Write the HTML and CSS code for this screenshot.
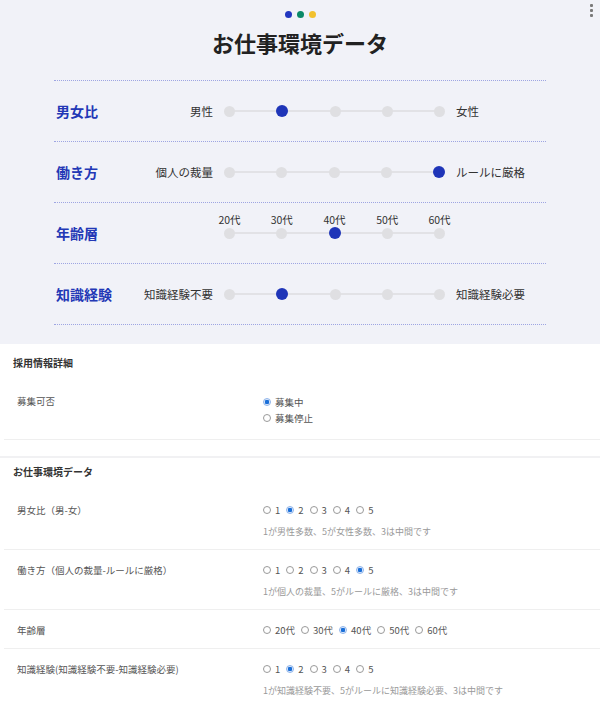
FILE: index.html
```html
<!DOCTYPE html>
<html lang="ja">
<head>
    <meta charset="UTF-8">
    <meta name="viewport" content="width=device-width, initial-scale=1.0">
    <title>お仕事環境データ</title>
    <link rel="stylesheet" href="styles.css">
</head>
<body>
    <div id="preview">
        <div class="menu-dots"><span></span><span></span><span></span></div>
        <div class="brand-dots">
            <span class="dot-blue"></span>
            <span class="dot-green"></span>
            <span class="dot-yellow"></span>
        </div>
        <h1>お仕事環境データ</h1>
        <div class="env-table">
            <div class="env-row">
                <div class="env-label">男女比</div>
                <div class="env-left">男性</div>
                <div class="scale">
                    <span class="stop"></span>
                    <span class="stop active"></span>
                    <span class="stop"></span>
                    <span class="stop"></span>
                    <span class="stop"></span>
                </div>
                <div class="env-right">女性</div>
            </div>
            <div class="env-row">
                <div class="env-label">働き方</div>
                <div class="env-left">個人の裁量</div>
                <div class="scale">
                    <span class="stop"></span>
                    <span class="stop"></span>
                    <span class="stop"></span>
                    <span class="stop"></span>
                    <span class="stop active"></span>
                </div>
                <div class="env-right">ルールに厳格</div>
            </div>
            <div class="env-row">
                <div class="env-label">年齢層</div>
                <div class="env-left"></div>
                <div class="scale">
                    <span class="stop"><em>20代</em></span>
                    <span class="stop"><em>30代</em></span>
                    <span class="stop active"><em>40代</em></span>
                    <span class="stop"><em>50代</em></span>
                    <span class="stop"><em>60代</em></span>
                </div>
                <div class="env-right"></div>
            </div>
            <div class="env-row">
                <div class="env-label">知識経験</div>
                <div class="env-left">知識経験不要</div>
                <div class="scale">
                    <span class="stop"></span>
                    <span class="stop active"></span>
                    <span class="stop"></span>
                    <span class="stop"></span>
                    <span class="stop"></span>
                </div>
                <div class="env-right">知識経験必要</div>
            </div>
        </div>
    </div>

    <div class="panel first">
        <h2 class="panel-title">採用情報詳細</h2>
        <div class="field">
            <div class="field-label">募集可否</div>
            <div class="field-body">
                <div class="radio-list">
                    <label class="radio"><span class="circle checked"></span>募集中</label>
                    <label class="radio"><span class="circle"></span>募集停止</label>
                </div>
            </div>
        </div>
    </div>

    <div class="panel">
        <h2 class="panel-title">お仕事環境データ</h2>
        <div class="field">
            <div class="field-label">男女比（男-女）</div>
            <div class="field-body">
                <div class="radio-row">
                    <label class="radio"><span class="circle"></span>1</label>
                    <label class="radio"><span class="circle checked"></span>2</label>
                    <label class="radio"><span class="circle"></span>3</label>
                    <label class="radio"><span class="circle"></span>4</label>
                    <label class="radio"><span class="circle"></span>5</label>
                </div>
                <p class="help">1が男性多数、5が女性多数、3は中間です</p>
            </div>
        </div>
        <div class="field">
            <div class="field-label">働き方（個人の裁量-ルールに厳格）</div>
            <div class="field-body">
                <div class="radio-row">
                    <label class="radio"><span class="circle"></span>1</label>
                    <label class="radio"><span class="circle"></span>2</label>
                    <label class="radio"><span class="circle"></span>3</label>
                    <label class="radio"><span class="circle"></span>4</label>
                    <label class="radio"><span class="circle checked"></span>5</label>
                </div>
                <p class="help">1が個人の裁量、5がルールに厳格、3は中間です</p>
            </div>
        </div>
        <div class="field">
            <div class="field-label">年齢層</div>
            <div class="field-body">
                <div class="radio-row">
                    <label class="radio"><span class="circle"></span>20代</label>
                    <label class="radio"><span class="circle"></span>30代</label>
                    <label class="radio"><span class="circle checked"></span>40代</label>
                    <label class="radio"><span class="circle"></span>50代</label>
                    <label class="radio"><span class="circle"></span>60代</label>
                </div>
            </div>
        </div>
        <div class="field">
            <div class="field-label">知識経験(知識経験不要-知識経験必要)</div>
            <div class="field-body">
                <div class="radio-row">
                    <label class="radio"><span class="circle"></span>1</label>
                    <label class="radio"><span class="circle checked"></span>2</label>
                    <label class="radio"><span class="circle"></span>3</label>
                    <label class="radio"><span class="circle"></span>4</label>
                    <label class="radio"><span class="circle"></span>5</label>
                </div>
                <p class="help">1が知識経験不要、5がルールに知識経験必要、3は中間です</p>
            </div>
        </div>
    </div>
</body>
</html>
```

FILE: styles.css
```css
body {
    margin: 0;
    padding: 0;
    background-color: #ffffff;
    font-family: "Noto Sans CJK JP", "Noto Sans", sans-serif;
    color: #333333;
}
#preview {
    position: relative;
    background-color: #f1f2f8;
    padding: 11px 0 19px;
}
.menu-dots {
    position: absolute;
    top: 4px;
    right: 7px;
    display: flex;
    flex-direction: column;
    gap: 2px;
}
.menu-dots span {
    width: 3px;
    height: 3px;
    border-radius: 1px;
    background-color: #7a7a7a;
}
.brand-dots {
    display: flex;
    justify-content: center;
    gap: 5px;
}
.brand-dots span {
    width: 7px;
    height: 7px;
    border-radius: 50%;
}
.dot-blue {
    background-color: #2237c0;
}
.dot-green {
    background-color: #0b8a68;
}
.dot-yellow {
    background-color: #f2c12e;
}
h1 {
    margin: 9px 0 0;
    font-size: 22px;
    line-height: 30px;
    font-weight: 700;
    text-align: center;
    color: #222222;
}
.env-table {
    width: 492px;
    margin: 23px auto 0;
    border-top: 1px dotted #9ea5e2;
}
.env-row {
    display: grid;
    grid-template-columns: 72px 76px 221px 1fr;
    column-gap: 11px;
    align-items: center;
    height: 60px;
    border-bottom: 1px dotted #9ea5e2;
}
.env-label {
    padding-left: 2px;
    font-size: 14px;
    font-weight: 700;
    color: #2338b6;
}
.env-left {
    text-align: right;
    white-space: nowrap;
    font-size: 11.5px;
    color: #333333;
}
.env-right {
    white-space: nowrap;
    font-size: 11.5px;
    color: #333333;
}
.scale {
    position: relative;
    display: flex;
    justify-content: space-between;
    align-items: center;
    height: 11px;
}
.scale::before {
    content: "";
    position: absolute;
    left: 5px;
    right: 5px;
    top: 4.5px;
    height: 2px;
    background-color: #e2e2e6;
}
.stop {
    position: relative;
    width: 11px;
    height: 11px;
    border-radius: 50%;
    background-color: #dfdfe2;
}
.stop.active {
    width: 12px;
    height: 12px;
    background-color: #1f35b8;
}
.stop em {
    position: absolute;
    bottom: 12px;
    left: 50%;
    transform: translateX(-50%);
    font-style: normal;
    font-size: 10.5px;
    line-height: 14px;
    white-space: nowrap;
    color: #333333;
}
.panel {
    background-color: #ffffff;
}
.panel.first {
    padding: 5px 0 16px;
    border-bottom: 2px solid #f1f1f3;
}
.panel-title {
    margin: 0;
    padding: 7px 13px 11px;
    font-size: 10px;
    line-height: 14px;
    font-weight: 700;
    color: #333333;
}
.field {
    display: grid;
    grid-template-columns: 246px 1fr;
    margin-left: 4px;
    padding: 13px 0 11px 13px;
    border-bottom: 1px solid #efefef;
}
.panel.first .field {
    padding-bottom: 13px;
}
.panel:last-child .field:last-child {
    border-bottom: none;
}
.field-label {
    font-size: 9.5px;
    line-height: 14px;
    color: #555555;
}
.radio-list {
    display: flex;
    flex-direction: column;
}
.radio-list .radio {
    line-height: 16px;
}
.radio-row {
    display: flex;
    gap: 6px;
}
.radio {
    display: flex;
    align-items: center;
    gap: 4px;
    font-size: 9.5px;
    line-height: 14px;
    color: #555555;
}
.circle {
    box-sizing: border-box;
    width: 8px;
    height: 8px;
    border: 1px solid #9a9a9a;
    border-radius: 50%;
    background-color: #ffffff;
}
.circle.checked {
    border-color: #8fb4ea;
    background: radial-gradient(circle, #1a6fd8 0 2px, #dce8fa 2.5px);
}
.help {
    margin: 8px 0 0;
    font-size: 9px;
    line-height: 13px;
    color: #999999;
}
```
